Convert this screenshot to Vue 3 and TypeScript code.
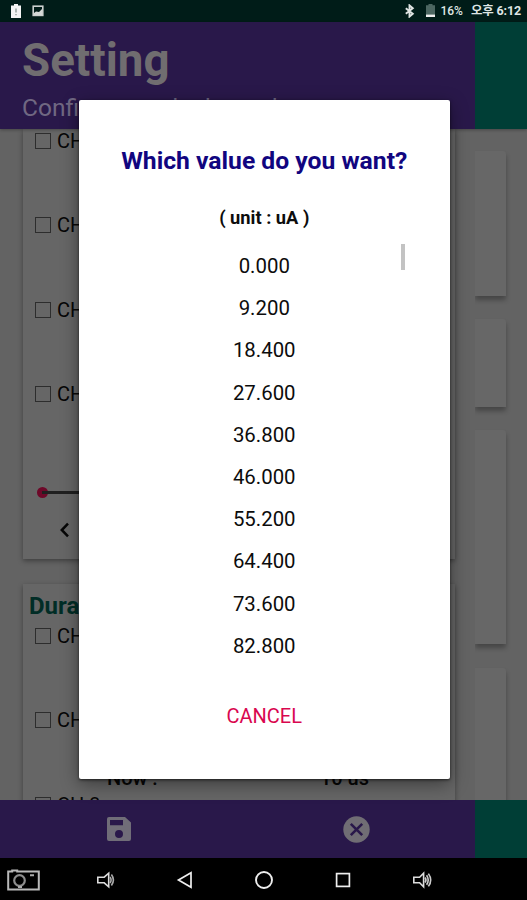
<script setup lang="ts">
interface Channel {
  id: number
  label: string
}

const amplitudeChannels: Channel[] = [1, 2, 3, 4].map((id) => ({ id, label: `CH ${id}` }))
const durationChannels: Channel[] = [1, 2, 3].map((id) => ({ id, label: `CH ${id}` }))
const values: string[] = Array.from({ length: 10 }, (_, i) => (i * 9.2).toFixed(3))
</script>

<template>
  <div class="screen">
    <div class="status">
      <div class="status-left">
        <svg class="st-batt" width="12" height="16" viewBox="0 0 12 16"><path d="M4 1h4v1.5h3V15H1V2.5h3z" fill="#f4f4f4" /><path d="M6 5.5v4M6 11v1.2" stroke="#9aa5a2" stroke-width="1.6" /></svg>
        <svg width="12" height="12" viewBox="0 0 12 12"><rect x="1.2" y="1.2" width="9.6" height="9.2" fill="none" stroke="#cbd0cf" stroke-width="1.6" /><path d="M2 8l2-1.5 3 .5L10 4v6H2z" fill="#d5d9d8" /></svg>
      </div>
      <div class="status-right">
        <svg class="bt" width="11" height="14" viewBox="0 0 11 14"><path d="M1.8 4.2l7 5.6-3.3 2.8V1.4L8.8 4.2l-7 5.6" fill="none" stroke="#e0e4e3" stroke-width="1.9" /></svg>
        <svg class="batt" width="9" height="13" viewBox="0 0 9 13"><path d="M2.5 0h4v1.3H9V13H0V1.3h2.5z" fill="#4c6661" /><rect y="10.6" width="9" height="2.4" fill="#eee" /></svg>
        <span class="pct">16%</span>
        <span class="clock">오후 6:12</span>
      </div>
    </div>

    <header class="head">
      <div class="head-main">
        <h1>Setting</h1>
        <p>Configure each channel</p>
      </div>
      <div class="accent"></div>
    </header>

    <main class="content">
      <div class="column">
        <section class="card first">
          <div v-for="c in amplitudeChannels" :key="c.id" class="channel"><i class="box"></i><span>{{ c.label }}</span></div>
          <div class="slider"><i class="knob"></i><i class="track"></i></div>
          <svg class="chev" width="11" height="16" viewBox="0 0 11 16"><path d="M9 1.7L2.8 8 9 14.3" fill="none" stroke="#060606" stroke-width="2.5" /></svg>
        </section>
        <section class="card second">
          <h2>Duration</h2>
          <div v-for="c in durationChannels" :key="c.id" class="channel">
            <i class="box"></i><span>{{ c.label }}</span>
            <div v-if="c.id === 2" class="now"><span>Now :</span><span>10 us</span></div>
          </div>
        </section>
      </div>
      <div class="side">
        <div class="panel p1"></div>
        <div class="panel p2"></div>
        <div class="panel p3"></div>
        <div class="panel p4"></div>
      </div>
    </main>

    <footer class="foot">
      <div class="foot-main">
        <div class="action"><svg width="24" height="24" viewBox="0 0 24 24"><path fill-rule="evenodd" d="M2 0h16l6 5.5V22a2 2 0 0 1-2 2H2a2 2 0 0 1-2-2V2a2 2 0 0 1 2-2zM3 3v5.3h13V3zM12 13a4 4 0 1 0 0 8 4 4 0 0 0 0-8z" fill="#706d78" /></svg></div>
        <div class="action"><svg width="27" height="27" viewBox="0 0 27 27"><circle cx="13.5" cy="13.5" r="13.2" fill="#706d74" /><path d="M7.8 7.8l11.4 11.4M19.2 7.8L7.8 19.2" stroke="#29184a" stroke-width="2.6" /></svg></div>
      </div>
      <div class="accent"></div>
    </footer>

    <nav class="nav">
      <svg width="33" height="22" viewBox="0 0 33 22" fill="none"><path d="M1.2 2.5h4V1.6h5v.9h21.6v18H1.2z" stroke="#b9b9b9" stroke-width="2" /><circle cx="12.5" cy="11.5" r="5.3" stroke="#8d8d8d" stroke-width="2.2" /><path d="M11 18h4M23 6.3h4" stroke="#aaa" stroke-width="2" /></svg>
      <svg width="20" height="18" viewBox="0 0 20 18" fill="none" stroke="#ddd" stroke-width="1.6"><path d="M1.8 6.2h6.4l4.5-4v13.6l-4.5-4H1.8z" /><path d="M14 6q2.2 3 0 6M15.4 3.6q4 5.4 0 10.8" stroke="#aaa" /></svg>
      <svg width="18" height="18" viewBox="0 0 18 18"><path d="M15 1.8v14.4L2.5 9z" fill="none" stroke="#eee" stroke-width="1.7" /></svg>
      <svg width="20" height="20" viewBox="0 0 20 20"><circle cx="10" cy="10" r="8" fill="none" stroke="#eee" stroke-width="1.9" /></svg>
      <svg width="16" height="16" viewBox="0 0 16 16"><rect x="1.6" y="1.6" width="12.8" height="12.8" fill="none" stroke="#eee" stroke-width="1.7" /></svg>
      <svg width="22" height="18" viewBox="0 0 22 18" fill="none" stroke="#ddd" stroke-width="1.6"><path d="M1.8 6.2h5.8l4-4v13.6l-4-4H1.8z" /><path d="M13 6.5q2 2.5 0 5M14.6 4.2q3.2 4.8 0 9.6M16.4 2.6q4.6 6.4 0 12.8" stroke="#ccc" /></svg>
    </nav>

    <div class="dialog">
      <h3>Which value do you want?</h3>
      <p class="unit">( unit : uA )</p>
      <div class="list">
        <ul>
          <li v-for="v in values" :key="v">{{ v }}</li>
        </ul>
        <i class="thumb"></i>
      </div>
      <button class="cancel">CANCEL</button>
    </div>
  </div>
</template>

<style>
body {
  margin: 0;
  background: #000;
}
</style>

<style scoped>
* {
  box-sizing: border-box;
}
.screen {
  position: relative;
  width: 527px;
  height: 900px;
  overflow: hidden;
  display: grid;
  grid-template-rows: 22px 107px 671px 58px 42px;
  font-family: Roboto, "Noto Sans CJK KR", sans-serif;
  color: #070707;
}
h1, h2, h3, p, ul {
  margin: 0;
  padding: 0;
}
svg {
  display: block;
  flex: none;
}
.status {
  background: #001c18;
  display: flex;
  justify-content: space-between;
  color: #dfe5e4;
  line-height: 22px;
}
.status-left {
  display: flex;
  align-items: center;
  gap: 10px;
  padding-left: 10px;
}
.status-right {
  display: flex;
  align-items: center;
  padding-right: 6px;
}
.bt {
  margin-right: 11px;
}
.batt {
  margin: -2px 5px 0 0;
}
.pct {
  font-size: 12px;
  font-weight: 500;
  width: 30.5px;
}
.clock {
  font-size: 12.5px;
  font-weight: 700;
  letter-spacing: -0.15px;
  white-space: nowrap;
}
.head {
  display: flex;
  z-index: 1;
  box-shadow: 0 1px 3px rgba(0, 0, 0, 0.3);
}
.head-main {
  width: 475px;
  background: #29184a;
  padding: 11px 0 0 22px;
  color: #706d70;
}
.head-main h1 {
  font-size: 45.7px;
  line-height: 56px;
  font-weight: 700;
}
.head-main p {
  font-size: 24.5px;
  line-height: 30px;
  margin-top: 4px;
  color: #706882;
}
.accent {
  flex: 1;
  background: #003e36;
}
.content {
  background: #636363;
  display: flex;
  overflow: hidden;
}
.column {
  width: 475px;
  padding-left: 23px;
}
.card {
  width: 432px;
  background: #666;
  box-shadow: 0 2px 5px rgba(0, 0, 0, 0.38);
}
.first {
  height: 430px;
  padding: 1px 0 0 12px;
}
.second {
  margin-top: 25px;
  height: 260px;
  padding: 8px 0 0 12px;
}
.second h2 {
  font-size: 24px;
  line-height: 28px;
  margin: 0 0 5px -6px;
  color: #012d26;
}
.channel {
  display: flex;
  align-items: flex-start;
  height: 84.3px;
  font-size: 20px;
  line-height: 23px;
  position: relative;
}
.box {
  width: 16px;
  height: 16px;
  margin: 3px 6px 0 0;
  border: 1.5px solid #2d2d2d;
}
.now {
  position: absolute;
  left: 72px;
  top: 58px;
  display: flex;
  width: 262px;
  justify-content: space-between;
  font-weight: 500;
}
.slider {
  display: flex;
  align-items: center;
  height: 11px;
  margin: 20px 0 0 2px;
}
.knob {
  width: 11px;
  height: 11px;
  border-radius: 50%;
  background: #6e0829;
}
.track {
  width: 380px;
  height: 3px;
  margin-left: -6px;
  background: #202020;
}
.chev {
  margin: 24px 0 0 24px;
}
.side {
  width: 31px;
  clip-path: inset(-10px -10px -10px 0);
}
.panel {
  background: #676767;
  border-radius: 0 3px 0 0;
  box-shadow: 0 4px 5px rgba(0, 0, 0, 0.3);
}
.p1 {
  height: 145px;
  margin-top: 22px;
}
.p2 {
  height: 88px;
  margin-top: 23px;
}
.p3 {
  height: 214px;
  margin-top: 23px;
}
.p4 {
  height: 180px;
  margin-top: 24px;
}
.foot {
  display: flex;
  z-index: 1;
}
.foot-main {
  width: 475px;
  background: #29184a;
  display: grid;
  grid-template-columns: 1fr 1fr;
}
.action {
  display: grid;
  place-items: center;
}
.nav {
  z-index: 1;
  background: #000;
  display: flex;
  align-items: center;
  padding: 1px 0 0 7px;
}
.nav svg:nth-child(2) {
  margin-left: 56px;
}
.nav svg:nth-child(3) {
  margin-left: 60px;
}
.nav svg:nth-child(4) {
  margin-left: 60px;
}
.nav svg:nth-child(5) {
  margin-left: 61px;
}
.nav svg:nth-child(6) {
  margin-left: 61px;
}
.dialog {
  position: absolute;
  z-index: 2;
  left: 78.5px;
  top: 100px;
  width: 371.5px;
  height: 678.5px;
  background: #fff;
  border-radius: 2px;
  box-shadow: 0 5px 18px rgba(0, 0, 0, 0.42), 0 1px 3px rgba(0, 0, 0, 0.6);
  text-align: center;
  color: #0c0c0c;
}
.dialog h3 {
  padding-top: 46px;
  font-size: 24.7px;
  line-height: 30px;
  font-weight: 700;
  color: #11057f;
}
.unit {
  margin-top: 30px;
  font-size: 18.3px;
  line-height: 24px;
  font-weight: 700;
}
.list {
  position: relative;
  margin-top: 15px;
}
.list ul {
  list-style: none;
}
.list li {
  height: 42.2px;
  line-height: 42.2px;
  font-size: 20.4px;
}
.thumb {
  position: absolute;
  right: 45px;
  top: -1px;
  width: 4px;
  height: 26px;
  background: #c3c3c3;
}
.cancel {
  margin-top: 32px;
  padding: 0;
  border: 0;
  background: none;
  font: 400 20px/34px Roboto, sans-serif;
  color: #d9074f;
}
</style>
